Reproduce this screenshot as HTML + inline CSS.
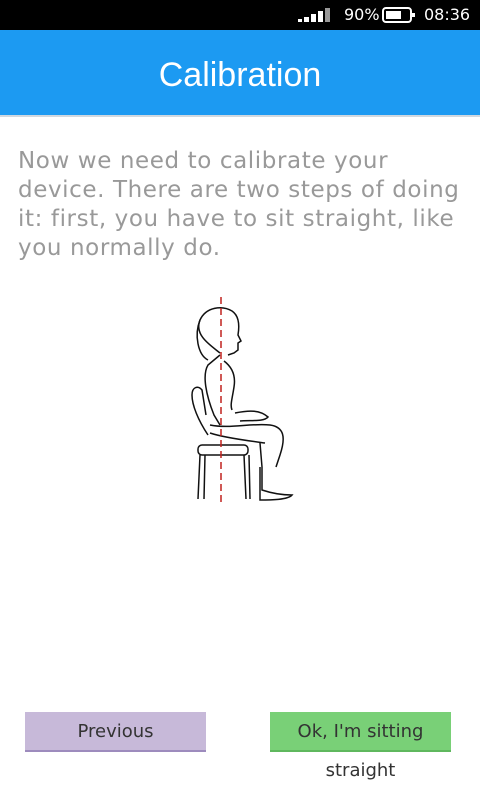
<!DOCTYPE html>
<html><head><style>
body{margin:0;width:480px;height:800px;background:#fff;position:relative;overflow:hidden;font-family:"DejaVu Sans",sans-serif}
.sb{position:absolute;top:0;left:0;width:480px;height:30px;background:#000;color:#fff;font-size:16px}
.hd{position:absolute;top:30px;left:0;width:480px;height:85px;background:#1c9af2;border-bottom:2px solid #d0d8e0;color:#fff;font-family:"Liberation Sans",sans-serif;font-size:34px;text-align:center;line-height:90px}
.tx{position:absolute;left:18px;top:147px;width:462px;color:#999;font-size:23px;line-height:29px;letter-spacing:0.6px}
.btn{position:absolute;top:712px;height:40px;width:181px;text-align:center;line-height:40px;color:#333;font-size:18px;box-sizing:border-box}
</style></head><body>
<div class="sb">
<svg style="position:absolute;left:298px;top:8px" width="36" height="14"><rect x="0" y="11" width="4" height="3" fill="#fff"/><rect x="6" y="9" width="5" height="5" fill="#fff"/><rect x="13" y="6" width="5" height="8" fill="#fff"/><rect x="20" y="3" width="5" height="11" fill="#fff"/><rect x="27" y="0" width="5" height="14" fill="#999"/></svg>
<span style="position:absolute;left:344px;top:5px">90%</span>
<svg style="position:absolute;left:382px;top:7px" width="34" height="16"><rect x="1" y="1" width="28" height="14" rx="3" fill="none" stroke="#fff" stroke-width="2"/><rect x="4" y="4" width="15" height="8" fill="#fff"/><rect x="30" y="6" width="3" height="4" fill="#fff"/></svg>
<span style="position:absolute;left:424px;top:5px">08:36</span>
</div>
<div class="hd">Calibration</div>
<div class="tx">Now we need to calibrate your device. There are two steps of doing it: first, you have to sit straight, like you normally do.</div>
<svg style="position:absolute;left:180px;top:295px" width="120" height="210" fill="none" stroke="#111" stroke-width="1.5">
<path d="M40 58 C30 50 14 40 20 25 C26 12 42 10 52 16 C58 20 60 28 58 40 L61 46 L58 48 L58 55 L54 58 L48 60"/>
<path d="M20 25 C14 40 18 60 28 65"/>
<path d="M40 60 L28 70 C22 80 26 100 34 120 L40 130"/>
<path d="M44 66 C52 72 56 80 54 92 C52 105 50 110 52 115"/>
<path d="M55 118 C70 115 80 115 88 122 C84 127 70 125 60 126"/>
<path d="M30 130 C50 134 70 128 90 130 C104 132 106 142 100 160 L96 172"/>
<path d="M30 138 C45 143 70 146 85 148"/>
<path d="M80 148 L82 172 L82 195 C88 197 100 200 112 200 C108 205 90 205 80 205 L80 172"/>
<path d="M28 140 C18 125 12 110 12 100 C12 92 18 90 22 95 L26 120"/>
<rect x="18" y="150" width="50" height="10" rx="4"/>
<path d="M20 160 L18 204 M25 160 L24 204 M64 160 L66 204 M69 160 L70 204"/>
</svg>
<svg style="position:absolute;left:218px;top:297px" width="6" height="206"><line x1="3" y1="0" x2="3" y2="206" stroke="#c0221f" stroke-width="1.5" stroke-dasharray="7 4"/></svg>
<div class="btn" style="left:25px;background:#c7b9d9;border-bottom:2px solid #9d8bbd">Previous</div>
<div class="btn" style="left:270px;background:#79d077;border-bottom:2px solid #5fb85e">Ok, I'm sitting</div>
<div style="position:absolute;left:270px;width:181px;top:760px;text-align:center;font-size:18px;color:#333">straight</div>
</body></html>
